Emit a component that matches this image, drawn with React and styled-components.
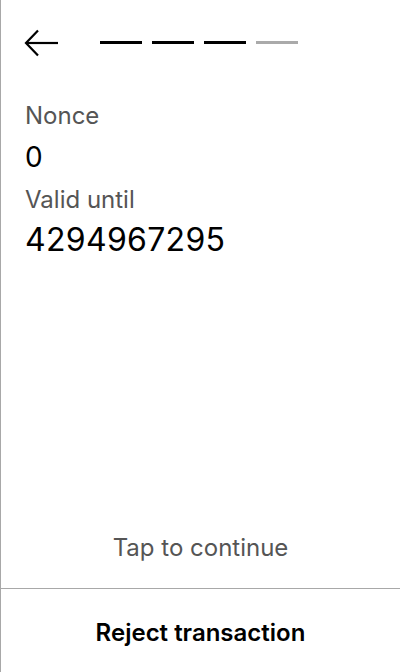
import React from "react";
import styled, { createGlobalStyle } from "styled-components";

const GlobalStyle = createGlobalStyle`
  html, body, #root {
    margin: 0;
    height: 100%;
  }
  body {
    font-family: Inter, "Noto Sans", sans-serif;
    background: #fff;
  }
`;

const Screen = styled.div`
  height: 100vh;
  box-sizing: border-box;
  border-left: 1px solid #a8a8a8;
  display: flex;
  flex-direction: column;
`;

const Header = styled.div`
  display: flex;
  align-items: center;
  height: 86px;
  padding: 0 0 0 23px;
`;

const BackButton = styled.button`
  border: 0;
  background: none;
  padding: 0;
  width: 34px;
  height: 28px;
  display: flex;
  cursor: pointer;
`;

const Steps = styled.div`
  display: flex;
  gap: 10px;
  margin-left: 42px;
  margin-top: -2px;
`;

const Step = styled.span`
  width: 42px;
  height: 3px;
  background: ${({ $done }) => ($done ? "#000" : "#aaa")};
`;

const Body = styled.div`
  flex: 1;
  padding: 16px 24px 0;
  display: flex;
  flex-direction: column;
`;

const Label = styled.div`
  font-size: 24px;
  color: #555;
  line-height: 28px;
`;

const Value = styled.div`
  font-size: ${({ $big }) => ($big ? "32px" : "28px")};
  letter-spacing: ${({ $big }) => ($big ? "0.3px" : "0")};
  color: #000;
  line-height: ${({ $big }) => ($big ? "38px" : "34px")};
  margin: ${({ $big }) => ($big ? "7px 0 0" : "10px 0 12px")};
`;

const Hint = styled.div`
  margin-top: auto;
  text-align: center;
  font-size: 24px;
  line-height: 28px;
  color: #555;
  padding-bottom: 26px;
`;

const Footer = styled.button`
  border: 0;
  border-top: 1px solid #a8a8a8;
  background: none;
  height: 84px;
  padding: 4px 0 0;
  font-family: Inter, "Noto Sans", sans-serif;
  font-size: 24px;
  font-weight: 600;
  color: #000;
  cursor: pointer;
`;

const ArrowLeft = () => (
  <svg width="34" height="28" viewBox="0 0 34 28" fill="none" stroke="#000" strokeWidth="2.2">
    <path d="M2 14H34" />
    <path d="M14 1.5L2 14L14 26.5" />
  </svg>
);

const steps = [true, true, true, false];

export default function App() {
  return (
    <>
      <GlobalStyle />
      <Screen>
        <Header>
          <BackButton aria-label="Back">
            <ArrowLeft />
          </BackButton>
          <Steps>
            {steps.map((done, i) => (
              <Step key={i} $done={done} />
            ))}
          </Steps>
        </Header>
        <Body>
          <Label>Nonce</Label>
          <Value>0</Value>
          <Label>Valid until</Label>
          <Value $big>4294967295</Value>
          <Hint>Tap to continue</Hint>
        </Body>
        <Footer>Reject transaction</Footer>
      </Screen>
    </>
  );
}
